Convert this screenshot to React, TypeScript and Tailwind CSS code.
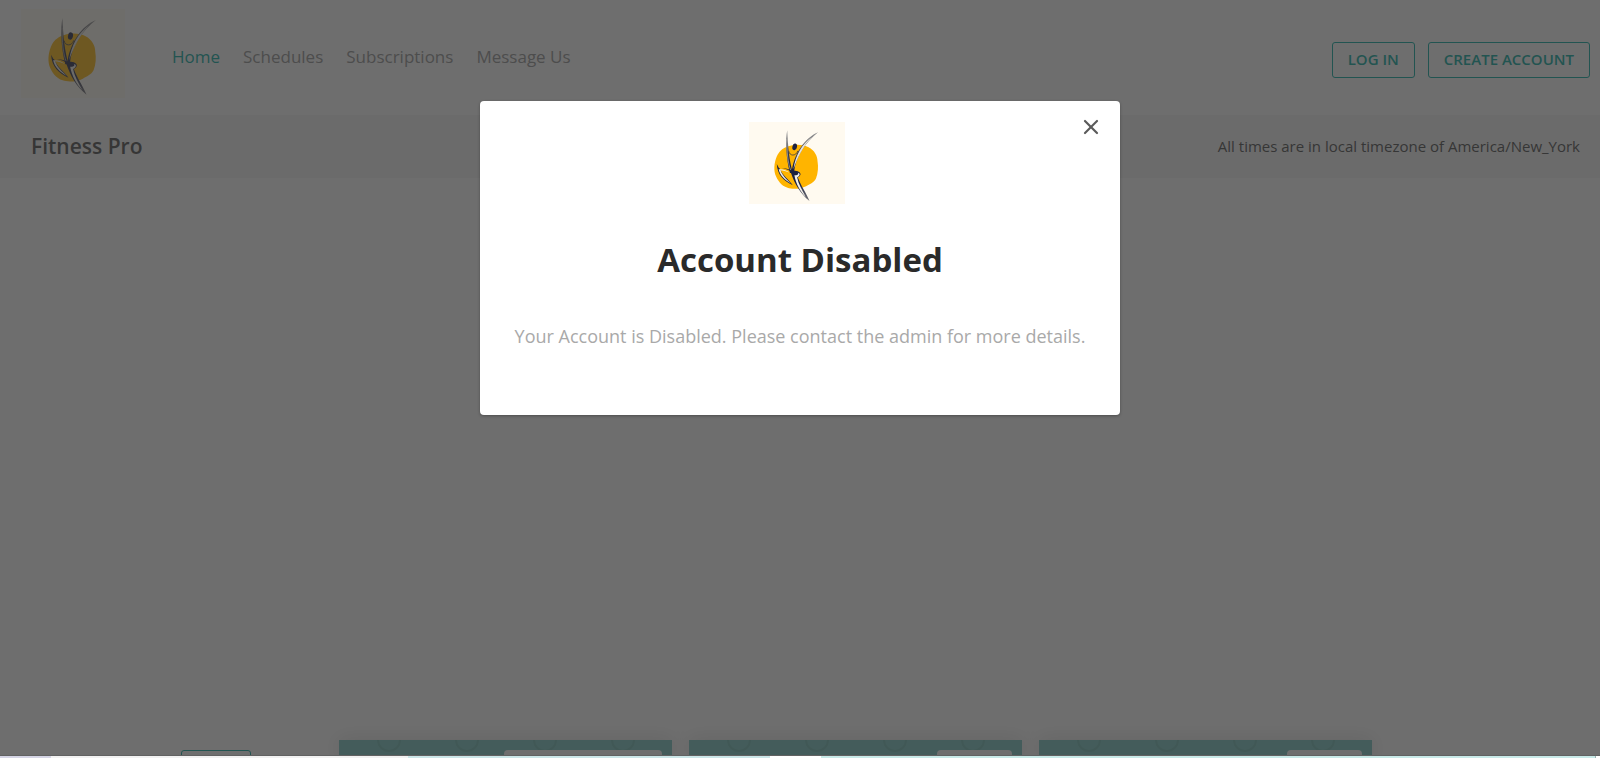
import { X } from "lucide-react";

const navItems = ["Home", "Schedules", "Subscriptions", "Message Us"];

const cards = [
  { id: "first", badge: "w-[158px]" },
  { id: "second", badge: "w-[75px]" },
  { id: "third", badge: "w-[75px]" },
];

function Logo({ className, id }: { className: string; id: string }) {
  return (
    <svg viewBox="18 14 311 267" preserveAspectRatio="none" role="img" aria-label="Fitness Pro logo" className={className}>
      <defs>
        <linearGradient id={id} gradientUnits="userSpaceOnUse" x1="0" y1="40" x2="0" y2="272">
          <stop offset="0" stopColor="#a5a5a3" />
          <stop offset="0.3" stopColor="#3c3d4a" />
          <stop offset="0.5" stopColor="#1d2140" />
          <stop offset="0.75" stopColor="#1d2140" />
          <stop offset="1" stopColor="#77777a" />
        </linearGradient>
      </defs>
      <rect x="18" y="14" width="311" height="267" fill="#fffaf0" />
      <path
        d="M146 93C160 86 194 85 211 96C230 106 240 124 240 142C243 160 242 180 235 198C228 212 214 216 203 223C186 232 158 234 143 228C122 222 110 203 103 185C97 164 101 140 111 120C118 107 131 97 146 93Z"
        fill="#ffb400"
      />
      <path d="M142 41C135 70 138 134 151 180L160 180C149 140 144 96 142 41Z" fill={`url(#${id})`} />
      <path d="M141 70C140 112 144 148 154 174" fill="none" stroke="#c9c6c0" strokeWidth="2" />
      <path d="M242 47C202 63 162 116 156 180L164 178C168 126 201 80 242 47Z" fill={`url(#${id})`} />
      <path d="M222 63C190 85 168 123 162 168C175 130 192 95 222 63Z" fill="#e6e3dd" />
      <ellipse cx="166" cy="95" rx="7.5" ry="11" transform="rotate(12 166 95)" fill="#1d2140" />
      <path d="M147 109C149 125 170 127 176 108" fill="none" stroke="#34364a" strokeWidth="2.5" />
      <path
        d="M108 151C110 188 132 207 160 220C145 200 127 190 117 165C136 165 149 170 160 182L181 185C180 173 162 173 151 170C138 163 122 166 115 164Z"
        fill={`url(#${id})`}
      />
      <path d="M114 168C126 166 139 171 150 179C138 175 129 171 120 171C127 191 141 201 155 215C134 203 119 190 114 168Z" fill="#f3f0e8" />
      <path d="M154 180C166 215 184 248 214 271C202 242 186 222 176 194C188 188 188 179 176 174C162 170 153 171 149 177Z" fill={`url(#${id})`} />
      <path d="M165 187C170 215 184 240 202 258C189 234 178 216 174 194C184 188 185 181 176 179C181 184 173 189 165 187Z" fill="#f3f0e8" />
    </svg>
  );
}

function ClassCard({ badge }: { badge: string }) {
  return (
    <article className="relative flex h-4 min-w-0 flex-1 justify-end bg-[#74c4be] px-[10px] pt-[10px] shadow-[0_0_20px_rgba(0,0,0,0.15)]">
      <svg className="absolute inset-0 h-4 w-full" aria-hidden="true">
        {[50, 128, 206, 284].map((cx) => (
          <circle key={cx} cx={cx} cy="0" r="11" fill="none" stroke="#68b5af" strokeWidth="2" />
        ))}
      </svg>
      <div className={`relative h-10 rounded-t-sm bg-white ${badge}`} />
    </article>
  );
}

export default function App() {
  return (
    <div className="flex h-screen flex-col overflow-hidden bg-white font-['Open_Sans',sans-serif]">
      <div className="relative flex min-h-0 flex-1 flex-col overflow-hidden border-b border-[#626262]">
        <header className="flex h-[115px] shrink-0 items-center pr-[10px] pl-[21px]">
          <Logo id="header-figure" className="mb-2 h-[89px] w-[104px] shrink-0" />
          <nav className="mb-[2px] ml-[47px] flex gap-[23px] text-[17px] leading-6">
            {navItems.map((item, i) => (
              <a key={item} href="#" className={i === 0 ? "text-[#00a89d]" : "text-[#8f8f8f]"}>
                {item}
              </a>
            ))}
          </nav>
          <div className="mt-1 ml-auto flex gap-[13px] text-[15px] font-semibold text-[#00a89d]">
            <button className="h-9 rounded-[3px] border border-[#00a89d] px-[15px]">LOG IN</button>
            <button className="h-9 rounded-[3px] border border-[#00a89d] px-[15px]">CREATE ACCOUNT</button>
          </div>
        </header>
        <section className="flex h-[63px] shrink-0 items-center justify-between bg-[#f4f4f4] pr-5 pl-[31px] text-[#444]">
          <h1 className="text-[21px] font-semibold">Fitness Pro</h1>
          <p className="text-[15px]">All times are in local timezone of America/New_York</p>
        </section>
        <main className="mt-auto flex h-[15px] shrink-0 items-start">
          <aside className="flex w-[339px] shrink-0 pt-[10px] pl-[181px]">
            <button aria-label="Filter" className="h-9 w-[70px] rounded-[3px] border border-[#00a89d]" />
          </aside>
          <div className="mr-[228px] flex flex-1 gap-[17px]">
            {cards.map((card) => (
              <ClassCard key={card.id} badge={card.badge} />
            ))}
          </div>
        </main>
        <div className="absolute inset-0 flex items-start justify-center bg-[rgba(49,49,49,0.7)] pt-[101px]">
          <div
            role="dialog"
            aria-modal="true"
            aria-labelledby="dialog-title"
            className="relative flex w-[640px] flex-col items-center rounded-[4px] bg-white pt-[21px] pb-[65px] shadow-[0_1px_3px_rgba(0,0,0,0.3)]"
          >
            <button aria-label="Close" className="absolute top-[14px] right-[17px] text-[#5a5a5a]">
              <X size={24} strokeWidth={2.2} />
            </button>
            <Logo id="dialog-figure" className="mr-[6px] h-[82px] w-24" />
            <h2 id="dialog-title" className="mt-8 text-[33px] leading-12 font-bold text-[#2a2a2a]">
              Account Disabled
            </h2>
            <p className="mt-[38px] text-[18px] leading-7 text-[#a9a9a9]">
              Your Account is Disabled. Please contact the admin for more details.
            </p>
          </div>
        </div>
      </div>
      <footer className="flex h-[2px] shrink-0">
        <div className="w-[51px] bg-[#d5d5e5]" />
        <div className="w-[357px] bg-[#f2f2f2]" />
        <div className="w-[362px] bg-[#cbe6e8]" />
        <div className="w-[51px] bg-white" />
        <div className="mr-[4px] flex-1 border-r border-[#9ab0b0] bg-[#c8eae8]" />
      </footer>
    </div>
  );
}
